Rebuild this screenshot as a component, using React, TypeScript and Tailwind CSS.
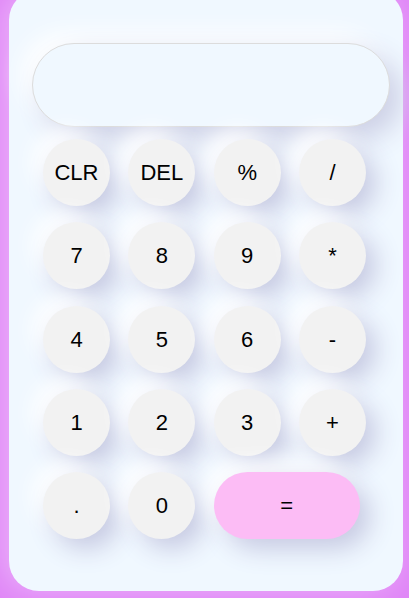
const keys: { label: string; wide?: boolean }[] = [
  { label: "CLR" },
  { label: "DEL" },
  { label: "%" },
  { label: "/" },
  { label: "7" },
  { label: "8" },
  { label: "9" },
  { label: "*" },
  { label: "4" },
  { label: "5" },
  { label: "6" },
  { label: "-" },
  { label: "1" },
  { label: "2" },
  { label: "3" },
  { label: "+" },
  { label: "." },
  { label: "0" },
  { label: "=", wide: true },
];

export default function App() {
  return (
    <div className="w-[409px] h-[598px] overflow-hidden bg-[#e086f7] pt-px">
      <div
        className="ml-[9px] mt-[-11px] w-[394px] h-[601px] rounded-[30px] bg-[#f0f8ff] pt-[53px] pl-[23px] shadow-[-6px_0px_30px_rgba(255,255,255,0.35)]"
        style={{ fontFamily: '"Liberation Sans", Arial, sans-serif' }}
      >
        <div className="w-[358px] h-[84px] rounded-full border border-[#dcdcdc] bg-[#f0f8ff] shadow-[12px_12px_28px_#cdd0e6,-10px_-10px_24px_#ffffff]" />
        <div className="mt-[12px] ml-[11px] grid grid-cols-[repeat(4,67px)] gap-x-[18.33px] gap-y-[16.25px]">
          {keys.map((k) => (
            <button
              key={k.label}
              className={
                k.wide
                  ? "col-span-2 w-[146px] h-[67px] rounded-full bg-[#fcbcf5] text-[22px] text-black shadow-[10px_10px_26px_#c6c9e2,-10px_-10px_22px_#ffffff]"
                  : "w-[67px] h-[67px] rounded-full bg-[#f2f2f2] text-[22px] text-black shadow-[10px_10px_26px_#c6c9e2,-10px_-10px_22px_#ffffff]"
              }
            >
              {k.label}
            </button>
          ))}
        </div>
      </div>
    </div>
  );
}
